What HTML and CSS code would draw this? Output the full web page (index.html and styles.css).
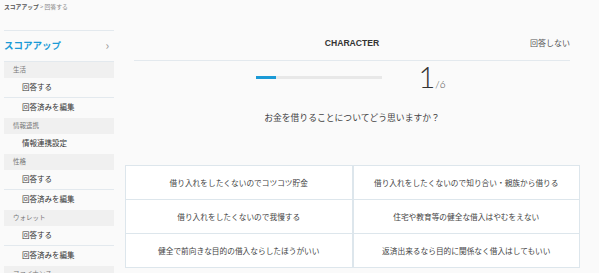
FILE: index.html
```html
<!DOCTYPE html>
<html lang="ja">
<head>
    <meta charset="UTF-8">
    <meta name="viewport" content="width=device-width, initial-scale=1.0">
    <title>スコアアップ - 回答する</title>
    <link rel="stylesheet" href="styles.css">
</head>
<body>
    <div class="breadcrumb"><span class="crumb-parent">スコアアップ</span> &gt; 回答する</div>

    <div class="layout">
        <div class="sidebar">
            <div class="side-title">
                <span>スコアアップ</span>
                <span class="chevron">&#x203A;</span>
            </div>
            <div class="side-cat">生活</div>
            <div class="side-item">回答する</div>
            <div class="side-item">回答済みを編集</div>
            <div class="side-cat">情報連携</div>
            <div class="side-item">情報連携設定</div>
            <div class="side-cat">性格</div>
            <div class="side-item">回答する</div>
            <div class="side-item">回答済みを編集</div>
            <div class="side-cat">ウォレット</div>
            <div class="side-item">回答する</div>
            <div class="side-item">回答済みを編集</div>
            <div class="side-cat">ファイナンス</div>
        </div>

        <div class="main">
            <div class="q-header">
                <span class="q-title">CHARACTER</span>
                <span class="q-skip">回答しない</span>
            </div>

            <div class="progress-row">
                <div class="progress-bar"><div class="progress-fill" style="width: 16%"></div></div>
                <div class="progress-count"><span class="count-now">1</span><span class="count-total">/6</span></div>
            </div>

            <p class="question">お金を借りることについてどう思いますか？</p>

            <div class="options">
                <div class="option-col">
                    <div class="option">借り入れをしたくないのでコツコツ貯金</div>
                    <div class="option">借り入れをしたくないので我慢する</div>
                    <div class="option">健全で前向きな目的の借入ならしたほうがいい</div>
                </div>
                <div class="option-col">
                    <div class="option">借り入れをしたくないので知り合い・親族から借りる</div>
                    <div class="option">住宅や教育等の健全な借入はやむをえない</div>
                    <div class="option">返済出来るなら目的に関係なく借入はしてもいい</div>
                </div>
            </div>
        </div>
    </div>
</body>
</html>
```

FILE: styles.css
```css
body {
    margin: 0;
    background: #fafafa;
    font-family: "Noto Sans CJK JP", "Noto Sans", sans-serif;
    color: #333;
    height: 273px;
    overflow: hidden;
}
.breadcrumb {
    padding: 2px 4px 0;
    height: 12px;
    font-size: 5.8px;
    line-height: 10px;
    color: #888;
}
.crumb-parent {
    color: #555;
    font-weight: bold;
}
.layout {
    display: flex;
    margin-top: 16px;
}
.sidebar {
    margin-left: 4px;
    width: 110px;
    flex-shrink: 0;
    border-top: 1px solid #e3e9ee;
}
.side-title {
    display: flex;
    justify-content: space-between;
    align-items: center;
    height: 27px;
    padding-bottom: 3px;
    border-bottom: 1px solid #e3e9ee;
    color: #1b9ad6;
    font-size: 9.5px;
    font-weight: bold;
}
.chevron {
    color: #999;
    font-weight: normal;
    font-size: 12px;
    margin-right: 5px;
}
.side-cat {
    height: 16px;
    line-height: 15px;
    padding-left: 9px;
    background: #f0f0f0;
    font-size: 6.5px;
    color: #777;
}
.side-item {
    height: 19px;
    line-height: 18px;
    padding-left: 18px;
    border-bottom: 1px solid #e3e9ee;
    font-size: 7.5px;
    color: #333;
}
.side-item:has(+ .side-cat) {
    border-bottom-color: transparent;
}
.main {
    width: 456px;
    margin-left: 10px;
}
.q-header {
    position: relative;
    margin: 0 10px;
    height: 30px;
    border-bottom: 1px solid #e3e9ee;
    display: flex;
    justify-content: center;
    align-items: center;
}
.q-title {
    font-family: "Liberation Sans", Arial, sans-serif;
    font-weight: bold;
    font-size: 8.6px;
    color: #333;
    margin-top: -4px;
}
.q-skip {
    position: absolute;
    right: 0;
    top: 7px;
    font-size: 8px;
    color: #555;
}
.progress-row {
    display: flex;
    align-items: center;
    justify-content: center;
    height: 33px;
}
.progress-bar {
    width: 126px;
    height: 3px;
    background: #e8e8e8;
}
.progress-fill {
    height: 3px;
    background: #1b9ad6;
}
.progress-count {
    margin-left: 37px;
    width: 30px;
    font-family: Lato, "Noto Sans", sans-serif;
    color: #333;
    margin-top: -2px;
}
.count-now {
    font-size: 29px;
    font-weight: 300;
}
.count-total {
    font-size: 10px;
    font-weight: 300;
}
.question {
    margin: 17px 0 0;
    text-align: center;
    font-size: 8.8px;
    color: #444;
}
.options {
    display: flex;
    margin: 41px 0 0 1px;
    width: 455px;
}
.option-col {
    flex: 1;
    border: 1px solid #dde6ec;
    background: #fff;
}
.option {
    height: 33px;
    line-height: 33px;
    text-align: center;
    font-size: 7.7px;
    color: #444;
    border-bottom: 1px solid #dde6ec;
}
.option:last-child {
    border-bottom: none;
}
```
